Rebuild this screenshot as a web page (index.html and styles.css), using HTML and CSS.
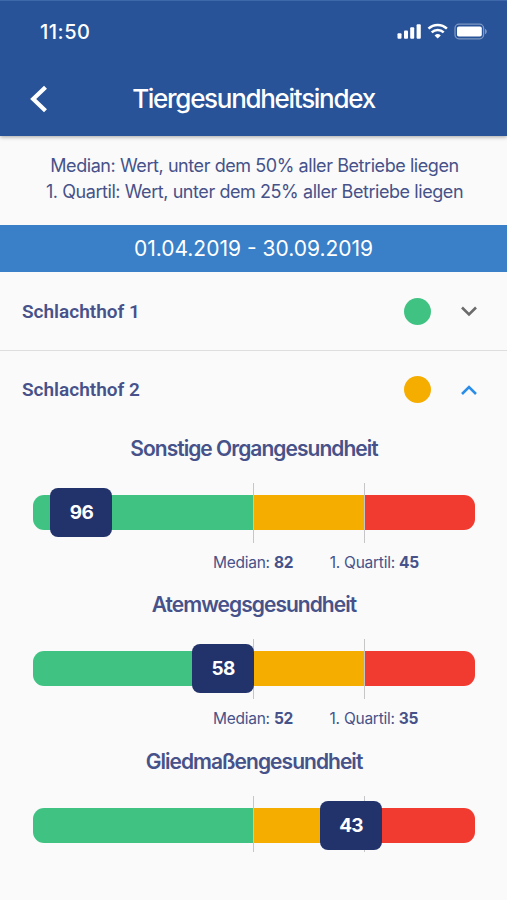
FILE: index.html
```
<!doctype html>
<html lang="de">
    <head>
        <meta charset="utf-8">
        <meta name="viewport" content="width=device-width, initial-scale=1">
        <title>Tiergesundheitsindex</title>
        <link rel="stylesheet" href="styles.css">
    </head>

    <body>
        <header class="header">
            <div class="statusbar">
                <span class="clock">11:50</span>
                <svg class="statusicons" width="90" height="18" viewBox="0 0 90 18">
                    <g fill="#fff">
                        <rect x="0.5" y="10.3" width="4" height="5.4" rx="1"/>
                        <rect x="7" y="7.6" width="4" height="8.1" rx="1"/>
                        <rect x="13.2" y="4.3" width="4" height="11.4" rx="1"/>
                        <rect x="19.6" y="1.3" width="4.2" height="14.4" rx="1"/>
                        <path d="M40.7 15.6l-3.1-3.1a4.5 4.5 0 0 1 6.2 0z"/>
                    </g>
                    <g fill="none" stroke="#fff" stroke-width="2.5">
                        <path d="M31.5 5.7a13.2 13.2 0 0 1 18.4 0"/>
                        <path d="M34.7 9.4a8.7 8.7 0 0 1 12 0"/>
                    </g>
                    <rect x="58" y="1.2" width="28.6" height="14.6" rx="4" fill="none" stroke="#fff" stroke-opacity="0.4" stroke-width="1.3"/>
                    <rect x="60" y="3.4" width="24.8" height="10.2" rx="1.8" fill="#fff"/>
                    <path d="M88 5.8c2.4 1 2.4 4.4 0 5.4z" fill="#fff" fill-opacity="0.4"/>
                </svg>
            </div>
            <div class="titlebar">
                <svg class="back" width="18" height="28" viewBox="0 0 18 28">
                    <path d="M15.5 2.2L3.2 14l12.3 11.8" fill="none" stroke="#fff" stroke-width="4.2"/>
                </svg>
                <h1 class="title">Tiergesundheitsindex</h1>
            </div>
        </header>

        <div class="info">
            <div>Median: Wert, unter dem 50% aller Betriebe liegen</div>
            <div>1. Quartil: Wert, unter dem 25% aller Betriebe liegen</div>
        </div>
        <div class="period">01.04.2019 - 30.09.2019</div>

        <div class="row closed">
            <span class="name">Schlachthof 1</span>
            <span class="dot green"></span>
            <svg class="chevron" width="18" height="12" viewBox="0 0 18 12">
                <path d="M2 2.5l7 7 7-7" fill="none" stroke="#6b6b6b" stroke-width="2.6"/>
            </svg>
        </div>
        <div class="row">
            <span class="name">Schlachthof 2</span>
            <span class="dot yellow"></span>
            <svg class="chevron" width="18" height="12" viewBox="0 0 18 12">
                <path d="M2 10l7-7 7 7" fill="none" stroke="#2a8de8" stroke-width="2.6"/>
            </svg>
        </div>

        <div class="index">
            <h2 class="organ">Sonstige Organgesundheit</h2>
            <div class="scale">
                <div class="bar"><i class="green"></i><i class="yellow"></i><i class="red"></i></div>
                <span class="line mid"></span>
                <span class="line quart"></span>
                <span class="value" style="left: 17.4px;">96</span>
            </div>
            <div class="labels"><span>Median: <b>82</b></span><span>1. Quartil: <b>45</b></span></div>
        </div>
        <div class="index">
            <h2 class="organ">Atemwegsgesundheit</h2>
            <div class="scale">
                <div class="bar"><i class="green"></i><i class="yellow"></i><i class="red"></i></div>
                <span class="line mid"></span>
                <span class="line quart"></span>
                <span class="value" style="left: 159px;">58</span>
            </div>
            <div class="labels"><span>Median: <b>52</b></span><span>1. Quartil: <b>35</b></span></div>
        </div>
        <div class="index">
            <h2 class="organ">Gliedmaßengesundheit</h2>
            <div class="scale last">
                <div class="bar"><i class="green"></i><i class="yellow"></i><i class="red"></i></div>
                <span class="line mid"></span>
                <span class="line quart"></span>
                <span class="value" style="left: 287px;">43</span>
            </div>
        </div>
    </body>

</html>
```
FILE: styles.css
```
*{
    box-sizing: border-box;
}

body{
    margin: 0;
    height: 900px;
    overflow: hidden;
    background-color: #fafafb;
    color: #465289;
    font-family: Inter, "Liberation Sans", sans-serif;
}

.header{
    height: 136px;
    background-color: #285399;
    border-top: 1px solid #3f68ab;
    box-shadow: 0 1px 4px rgba(0, 0, 0, 0.35);
    color: white;
}

.statusbar{
    display: flex;
    justify-content: space-between;
    align-items: center;
    height: 61px;
    padding: 0 20px 0 40px;
}

.clock{
    font-size: 20px;
    font-weight: 500;
    letter-spacing: 0.5px;
}

.titlebar{
    display: flex;
    align-items: center;
    height: 73px;
    padding: 0 48px 0 30px;
}

.title{
    flex: 1;
    margin: 0;
    font-size: 26px;
    font-weight: 500;
    letter-spacing: -1.3px;
    text-align: center;
}

.info{
    height: 89px;
    padding: 17px 0 0 2px;
    font-size: 18px;
    line-height: 26px;
    letter-spacing: -0.43px;
    text-align: center;
    white-space: nowrap;
}

.period{
    height: 47px;
    background-color: #3a80c8;
    color: white;
    font-size: 21px;
    line-height: 47px;
    text-align: center;
}

.row{
    display: flex;
    align-items: center;
    height: 77px;
    padding: 0 29px 0 22px;
}

.closed{
    height: 79px;
    border-bottom: 1px solid #dedede;
}

.name{
    flex: 1;
    font-family: Roboto, sans-serif;
    font-size: 19px;
    font-weight: 600;
}

.dot{
    width: 27px;
    height: 27px;
    margin-right: 29px;
    border-radius: 50%;
}

.green{
    background-color: #40c382;
}

.yellow{
    background-color: #f5ad00;
}

.red{
    background-color: #f23b30;
}

.index{
    height: 156.5px;
    padding: 7.5px 32px 0 33px;
}

.organ{
    margin: 0 0 21px;
    font-size: 21px;
    font-weight: 600;
    line-height: 26px;
    letter-spacing: -0.97px;
    text-align: center;
}

.scale{
    position: relative;
    height: 60px;
    padding-top: 12px;
}

.bar{
    display: grid;
    grid-template-columns: 221px 111px 1fr;
    height: 35px;
    border-radius: 11px;
    overflow: hidden;
}

.line{
    position: absolute;
    top: 0;
    width: 1px;
    height: 60px;
    background-color: #c6c6c8;
}

.last .line{
    height: 56px;
}

.mid{
    left: 220.4px;
}

.quart{
    left: 331px;
}

.value{
    position: absolute;
    top: 5px;
    width: 62px;
    height: 49px;
    border-radius: 8px;
    background-color: #22336b;
    color: white;
    font-size: 19px;
    font-weight: 700;
    line-height: 49px;
    letter-spacing: -0.7px;
    text-align: center;
}

.labels{
    display: flex;
    gap: 36.5px;
    padding: 10px 0 0 180px;
    font-size: 15.5px;
    line-height: 20px;
    letter-spacing: -0.26px;
    white-space: nowrap;
}
```
